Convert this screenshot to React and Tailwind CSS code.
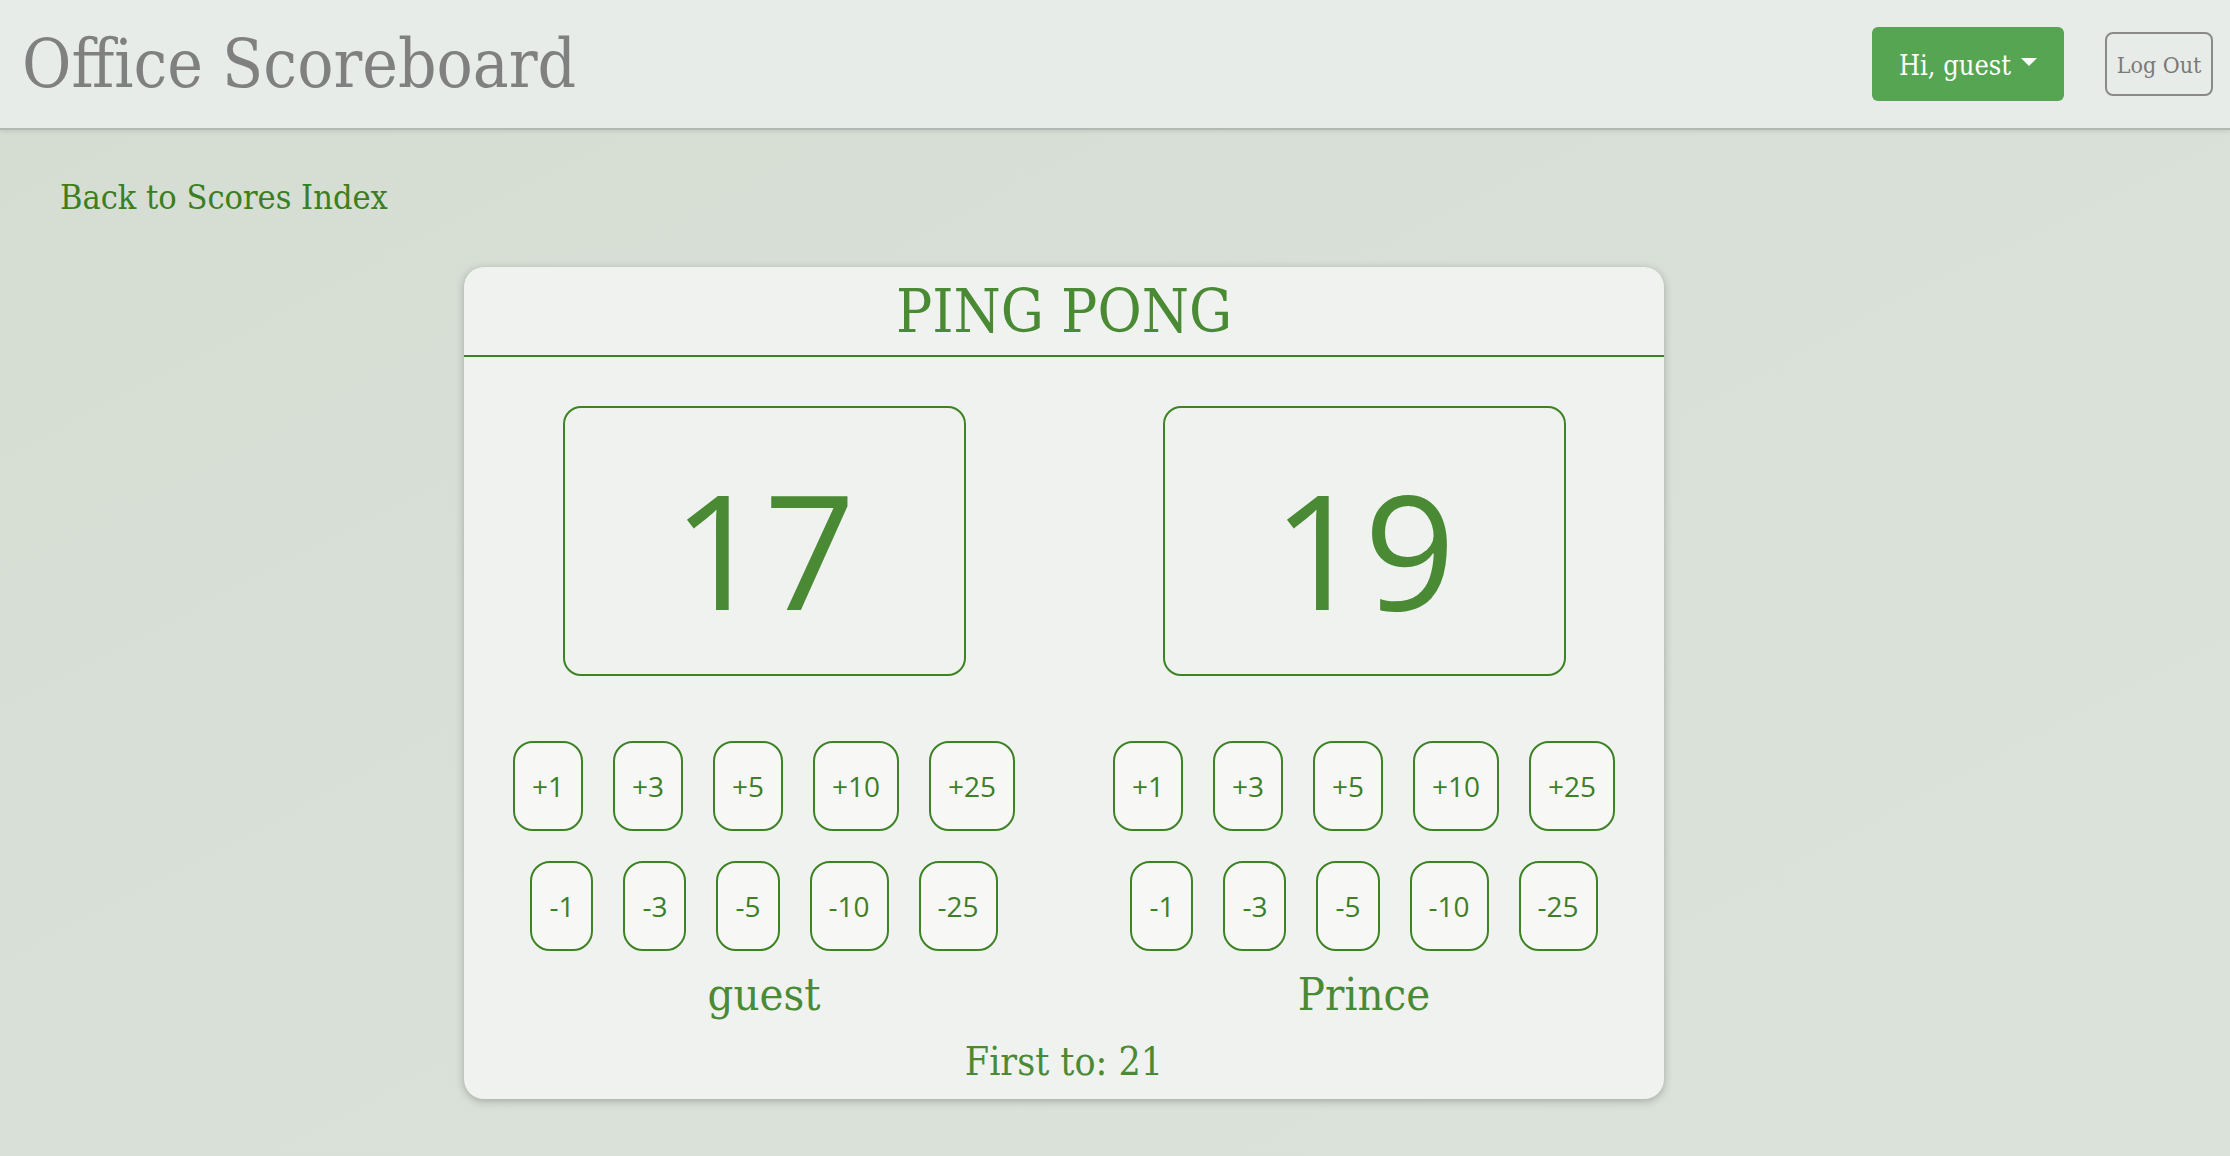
import React, { useState } from 'react';

const serif = "font-['DejaVu_Serif_Condensed','DejaVu_Serif',serif] [font-stretch:condensed]";
const sans = "font-['Open_Sans','Liberation_Sans',sans-serif]";

const plusSteps = [1, 3, 5, 10, 25];

const StepButton = ({ label, onClick }) => (
  <button
    onClick={onClick}
    className={`${sans} h-[90px] px-[17px] flex items-center justify-center rounded-[20px] border-2 border-[#3d8224] bg-[#f7f8f6] text-[28px] font-medium text-[#3d7f26] leading-none`}
  >
    {label}
  </button>
);

const PlayerColumn = ({ name, score, onChange }) => (
  <div className="flex flex-col items-center">
    <div className="mt-[49px] w-[403px] h-[270px] rounded-[18px] border-2 border-[#3d8224] flex items-center justify-center">
      <span className={`${sans} text-[160px] font-medium leading-none text-[#4b8a35] pt-[14px]`}>{score}</span>
    </div>

    <div className="mt-[65px] flex justify-center gap-[30px]">
      {plusSteps.map((s) => (
        <StepButton key={`p${s}`} label={`+${s}`} onClick={() => onChange(s)} />
      ))}
    </div>
    <div className="mt-[30px] flex justify-center gap-[30px]">
      {plusSteps.map((s) => (
        <StepButton key={`m${s}`} label={`-${s}`} onClick={() => onChange(-s)} />
      ))}
    </div>

    <div className={`${serif} mt-[21px] text-[45px] leading-none text-[#4b8a35]`}>{name}</div>
  </div>
);

export default function App() {
  const [scores, setScores] = useState({ guest: 17, prince: 19 });

  const bump = (key) => (n) =>
    setScores((prev) => ({ ...prev, [key]: Math.max(0, prev[key] + n) }));

  return (
    <div className="min-h-screen bg-gradient-to-br from-[#d5ddd3] via-[#d9e0d7] to-[#dbe2d9]">
      <header className="h-[130px] bg-[#e8ece8] border-b-2 border-[#b4b8b3] shadow-[0_2px_4px_rgba(0,0,0,0.08)] flex items-center justify-between pl-[22px] pr-[17px]">
        <h1 className={`${serif} text-[67px] leading-none text-[#808080]`}>Office Scoreboard</h1>
        <div className="flex items-center gap-[41px]">
          <button className={`${serif} w-[192px] h-[74px] rounded-[6px] bg-[#55a552] text-white text-[27px] flex items-center justify-center gap-[10px] pt-[4px]`}>
            Hi, guest
            <span className="w-0 h-0 border-l-[8px] border-r-[8px] border-t-[8px] border-l-transparent border-r-transparent border-t-white mb-[8px]" />
          </button>
          <button className={`${serif} w-[108px] h-[64px] rounded-[8px] border-2 border-[#8a8a8a] text-[23px] text-[#7a7a7a] flex items-center justify-center pt-[2px]`}>
            Log Out
          </button>
        </div>
      </header>

      <main className="pb-[58px]">
        <a href="#" className={`${serif} block mt-[50px] ml-[60px] w-fit text-[34px] leading-none text-[#3b7f22]`}>
          Back to Scores Index
        </a>

        <section className="mt-[53px] ml-[464px] w-[1200px] rounded-[20px] bg-[#f0f2ef] shadow-[0_2px_8px_rgba(0,0,0,0.25)] pb-[18px]">
          <div className="h-[90px] border-b-2 border-[#3d8224] flex items-center justify-center">
            <h2 className={`${serif} text-[60px] leading-none text-[#4b8a35]`}>PING PONG</h2>
          </div>

          <div className="grid grid-cols-2">
            <PlayerColumn name="guest" score={scores.guest} onChange={bump('guest')} />
            <PlayerColumn name="Prince" score={scores.prince} onChange={bump('prince')} />
          </div>

          <div className={`${serif} mt-[25px] text-center text-[39px] leading-none text-[#4b8a35]`}>
            First to: 21
          </div>
        </section>
      </main>
    </div>
  );
}
